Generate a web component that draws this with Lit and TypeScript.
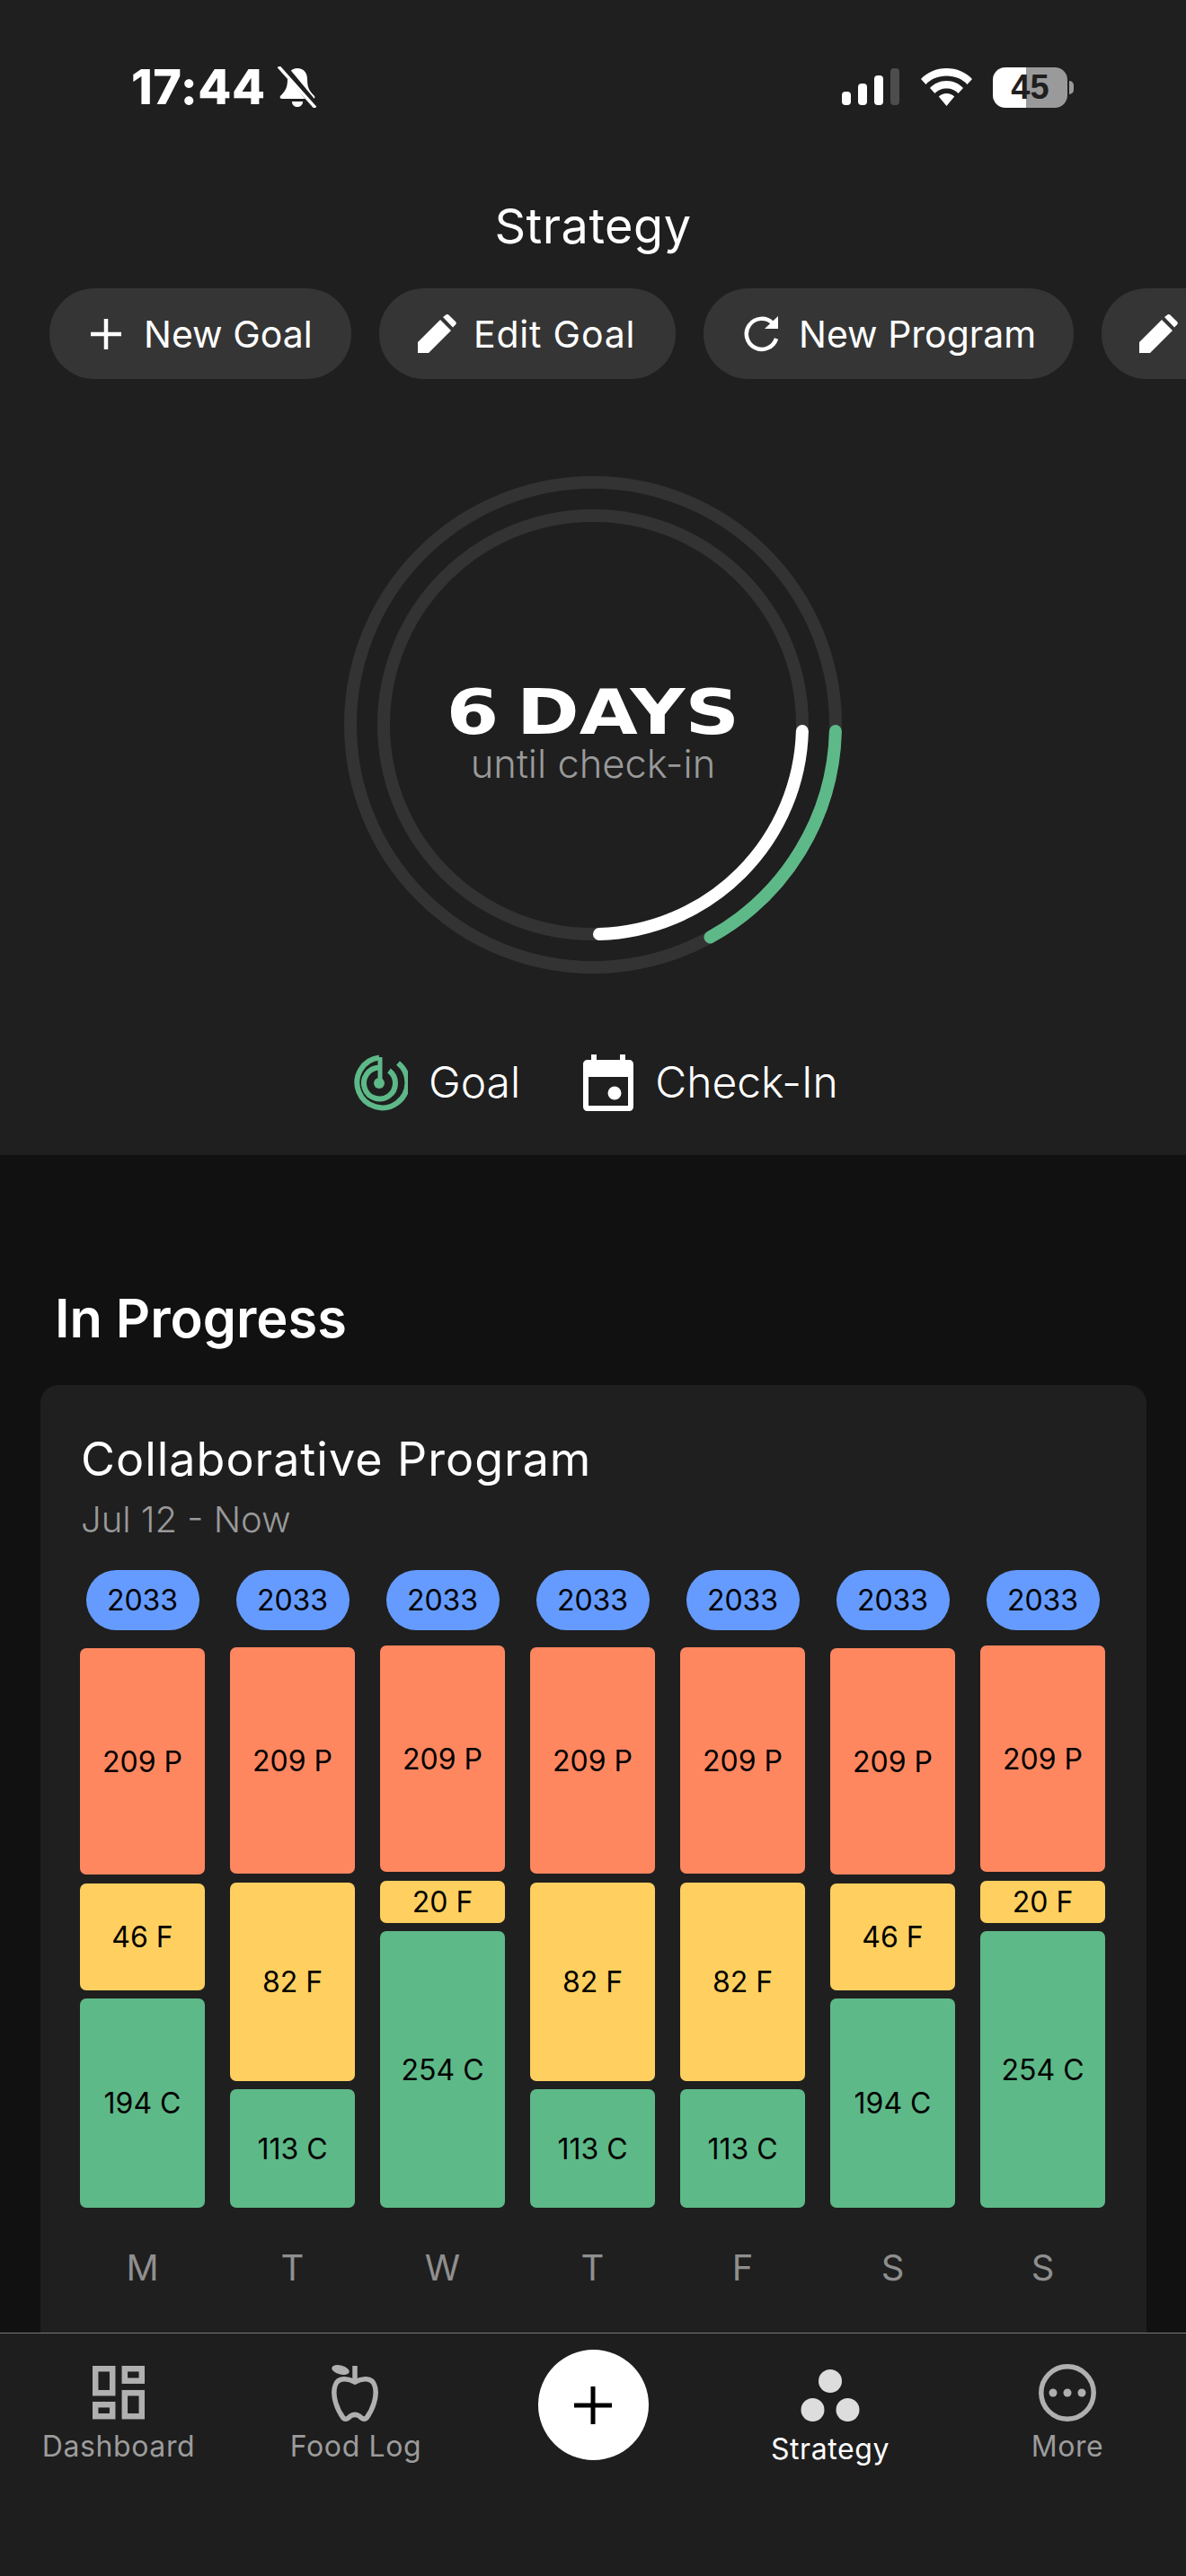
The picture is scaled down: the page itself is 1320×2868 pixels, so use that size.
import { LitElement, html, css, svg } from "lit";
import { customElement } from "lit/decorators.js";

type Day = { d: string; f: number; c: number; fh: number; ch: number };
const A = { f: 46, c: 194, fh: 119, ch: 233 };
const B = { f: 82, c: 113, fh: 221, ch: 132 };
const C = { f: 20, c: 254, fh: 47, ch: 308 };
const DAYS: Day[] = [
  { d: "M", ...A }, { d: "T", ...B }, { d: "W", ...C }, { d: "T", ...B },
  { d: "F", ...B }, { d: "S", ...A }, { d: "S", ...C },
];
const PENCIL = svg`<path d="M0 43V31L25 6l12 12L12 43zM28 3l3-2.300c1-1 2.500-1 3.500 0l7.500 7.300c1 1 1 2.500 0 3.500l-3 3z" fill="#fff"/>`;

@customElement("app-root")
export class AppRoot extends LitElement {
  static styles = css`
    :host { display: block; width: 1320px; height: 2868px; overflow: hidden; background: #111; font-family: "Inter", "Liberation Sans", sans-serif; color: #fff; }
    .page { height: 2868px; display: flex; flex-direction: column; }
    .scroll { flex: 1; min-height: 0; overflow: hidden; }
    .top { height: 1286px; background: #1f1f1f; display: flex; flex-direction: column; overflow: hidden; }
    .top > * { flex: none; }
    .status { box-sizing: border-box; height: 220px; padding: 73px 0 0 146px; display: flex; align-items: flex-start; }
    .status-row { height: 48px; display: flex; align-items: center; }
    .time { font-size: 54px; font-weight: 800; line-height: 48px; width: 162px; letter-spacing: 0.500px; }
    .status-right { margin-left: 583px; display: flex; align-items: center; gap: 23px; }
    .battery { width: 83px; height: 45px; border-radius: 14px; background: linear-gradient(90deg, #fff 0 37px, #9a9a9a 37px); color: #1f1f1f; font: 700 38px/45px "Liberation Sans", sans-serif; text-align: center; position: relative; margin-right: 9px; }
    .battery::after { content: ""; position: absolute; left: 85px; top: 15px; width: 5px; height: 15px; border-radius: 0 5px 5px 0; background: #9a9a9a; }
    h1 { margin: 0; font-size: 54px; line-height: 64px; font-weight: 400; text-align: center; letter-spacing: 0.5px; }
    .chips { margin-top: 37px; height: 101px; padding-left: 55px; display: flex; gap: 31px; white-space: nowrap; overflow: hidden; }
    .chip { flex: none; box-sizing: border-box; height: 101px; border-radius: 50px; background: #353535; display: flex; align-items: center; font-size: 41px; }
    .chip svg { flex: none; display: block; }
    .chip.wide { letter-spacing: 0.800px; }
    .ring { margin-top: 95px; align-self: center; width: 580px; height: 580px; display: grid; }
    .ring > * { grid-area: 1 / 1; }
    .ring-text { display: flex; flex-direction: column; align-items: center; padding-top: 242px; }
    .big { font: 700 70px/68px "DejaVu Sans", sans-serif; transform: scaleX(1.2); word-spacing: -8px; white-space: nowrap; }
    .sub { font-size: 43.500px; line-height: 50px; color: #9a9a9a; margin-top: -2px; font-weight: 300; }
    .legend { margin-top: 76px; height: 64px; display: flex; padding-left: 391px; align-items: center; font-size: 48px; font-weight: 300; }
    .legend span { line-height: 64px; }
    .l1 { margin: 0 70px 0 23px; }
    .l2 { margin-left: 24px; }
    .lower { padding: 141px 44px 0 45px; }
    h2 { margin: 0 0 0 16px; font-size: 59.500px; line-height: 80px; font-weight: 600; }
    .card { margin-top: 35px; background: #1f1f1f; border-radius: 20px; padding: 51px 44px 40px 45px; height: 1200px; box-sizing: border-box; }
    .card h3 { margin: 0; font-size: 52px; line-height: 64px; font-weight: 400; letter-spacing: 1px; }
    .dates { margin-top: 10px; font-size: 40px; line-height: 50px; font-weight: 300; color: #999; }
    .week { margin: 31px 0 0 -1px; display: grid; grid-template-columns: repeat(7, 139px); gap: 28px; }
    .day { display: flex; flex-direction: column; align-items: center; }
    .pill { width: 126px; height: 67px; border-radius: 34px; background: #659bff; color: #000; font-size: 32px; line-height: 67px; text-align: center; }
    .stack { margin-top: 17px; width: 100%; height: 626px; display: flex; flex-direction: column; justify-content: flex-end; gap: 9.500px; }
    .bar { border-radius: 7px; color: #000; font-size: 32px; display: flex; align-items: center; justify-content: center; }
    .p { background: #ff8760; height: 252px; }
    .f { background: #ffd05f; }
    .c { background: #5eb988; }
    .dow { margin-top: 42px; font-size: 40px; line-height: 50px; color: #8f8f8f; font-weight: 400; }
    nav { flex: none; height: 271px; border-top: 1px solid #777; box-sizing: border-box; background: #1e1e1e; display: grid; grid-template-columns: repeat(5, 264px); }
    .tab { display: flex; flex-direction: column; align-items: center; color: #9c9c9c; font-size: 32px; padding-top: 32px; }
    .icon { height: 66px; display: flex; align-items: flex-end; }
    .icon svg { display: block; }
    .tab span { margin-top: 6px; line-height: 44px; letter-spacing: 0.600px; }
    .tab.on { color: #fff; }
    .tab.on span { margin-top: 9px; }
    .add { width: 123px; height: 123px; border-radius: 50%; background: #fff; margin-top: -14px; display: flex; align-items: center; justify-content: center; }
  `;

  private chip(icon: unknown, w: number, label: string, pl: number, gap: number, cls = "chip") {
    return html`<div class=${cls} style="padding-left:${pl}px;gap:${gap}px;width:${w}px">${icon}${label}</div>`;
  }

  render() {
    return html`<div class="page">
      <div class="scroll">
        <section class="top">
          <div class="status">
            <div class="status-row">
              <div class="time">17:44</div>
              <svg width="46" height="46" viewBox="0 0 46 46">
                <path d="M23 2c7 0 11 5 11 12 0 9 2 13 8 19 1 2 0 3-2 3H6c-2 0-3-1-2-3 6-6 8-10 8-19C12 7 16 2 23 2zM17 39h12c0 4-3 6-6 6s-6-2-6-6z" fill="#fff"/>
                <path d="M6-1 45 46" stroke="#1f1f1f" stroke-width="8"/>
                <path d="M2 0 43 46" stroke="#fff" stroke-width="3.500"/>
              </svg>
            </div>
            <div class="status-row status-right">
              <svg width="65" height="42" viewBox="0 0 65 42"><rect y="26" width="10" height="15" rx="4" fill="#fff"/><rect x="18" y="17" width="10" height="24" rx="4" fill="#fff"/><rect x="36" y="8" width="10" height="33" rx="4" fill="#fff"/><rect x="54" y="0" width="10" height="41" rx="4" fill="#4d4d4d"/></svg>
              <svg width="57" height="42" viewBox="0 0 57 42">
                <path d="M28.500 0C17 0 7 4.500 0 12l5.500 6C11 12 19 8.500 28.500 8.500S46 12 51.500 18L57 12C50 4.500 40 0 28.500 0z" fill="#fff"/>
                <path d="M28.500 14c-7.500 0-14 3-18.500 8l5.500 6c3-3.500 8-5.500 13-5.500s10 2 13 5.500l5.500-6c-4.500-5-11-8-18.500-8z" fill="#fff"/>
                <path d="M28.500 28c-3.500 0-6.500 1.500-8.700 3.500L28.500 42l8.700-10.500C35 29.500 32 28 28.500 28z" fill="#fff"/>
              </svg>
              <div class="battery">45</div>
            </div>
          </div>
          <h1>Strategy</h1>
          <div class="chips">
            ${this.chip(svg`<svg width="34" height="34" viewBox="0 0 34 34"><path d="M17 0v34M0 17h34" stroke="#fff" stroke-width="4.500"/></svg>`, 336, "New Goal", 46, 25)}
            ${this.chip(svg`<svg width="43" height="43" viewBox="0 0 43 43">${PENCIL}</svg>`, 330, "Edit Goal", 43, 19, "chip wide")}
            ${this.chip(svg`<svg width="40" height="40" viewBox="0 0 40 40"><path d="M32 8A17 17 0 1 0 36 25" fill="none" stroke="#fff" stroke-width="4.500"/><path d="M23 14h15V0z" fill="#fff"/></svg>`, 412, "New Program", 45, 21)}
            ${this.chip(svg`<svg width="43" height="43" viewBox="0 0 43 43">${PENCIL}</svg>`, 200, "", 42, 0)}
          </div>
          <div class="ring">
            <svg width="580" height="580" viewBox="-290 -290 580 580" fill="none" stroke-width="14">
              <circle r="270" stroke="#333"/>
              <circle r="233" stroke="#333"/>
              <path d="M269.900 7A270 270 0 0 1 130.500 236.400" stroke="#5eb988" stroke-linecap="round"/>
              <path d="M232.900 7A233 233 0 0 1 7 233" stroke="#fff" stroke-linecap="round"/>
            </svg>
            <div class="ring-text">
              <div class="big">6 DAYS</div>
              <div class="sub">until check-in</div>
            </div>
          </div>
          <div class="legend">
            <svg width="63" height="63" viewBox="0 0 63 63" fill="none" stroke="#5eb988" stroke-width="6">
              <path d="M52 9.500A28 28 0 1 1 31 3.500"/>
              <path d="M42 18A17.500 17.500 0 1 1 31 14.500"/>
              <path d="M32 3V32" stroke-width="5"/>
              <circle cx="31" cy="32" r="6" fill="#5eb988" stroke="none"/>
            </svg>
            <span class="l1">Goal</span>
            <svg width="56" height="63" viewBox="0 0 56 63"><path fill-rule="evenodd" fill="#fff" d="M9 0h6v6h26V0h6v6h4c3 0 5 2 5 5v47c0 3-2 5-5 5H5c-3 0-5-2-5-5V11c0-3 2-5 5-5h4zM6 25v32h44V25z"/><circle cx="35" cy="43" r="7.500" fill="#fff"/></svg>
            <span class="l2">Check-In</span>
          </div>
        </section>
        <section class="lower">
          <h2>In Progress</h2>
          <div class="card">
            <h3>Collaborative Program</h3>
            <div class="dates">Jul 12 - Now</div>
            <div class="week">
              ${DAYS.map((d) => html`<div class="day">
                <div class="pill">2033</div>
                <div class="stack">
                  <div class="bar p">209 P</div>
                  <div class="bar f" style="height:${d.fh}px">${d.f} F</div>
                  <div class="bar c" style="height:${d.ch}px">${d.c} C</div>
                </div>
                <div class="dow">${d.d}</div>
              </div>`)}
            </div>
          </div>
        </section>
      </div>
      <nav>
        <div class="tab">
          <div class="icon"><svg width="58" height="62" viewBox="0 0 58 62" fill="none" stroke="#b0b0b0" stroke-width="6.500"><rect x="3.200" y="3.200" width="19" height="27"/><rect x="35.800" y="3.200" width="19" height="13.500"/><rect x="3.200" y="43.200" width="19" height="13"/><rect x="35.800" y="30.200" width="19" height="26"/></svg></div>
          <span>Dashboard</span>
        </div>
        <div class="tab">
          <div class="icon"><svg width="56" height="64" viewBox="0 0 56 64" fill="none" stroke="#b0b0b0" stroke-width="5.500"><path d="M27 20C20 16 8 14 5 24C1 36 8 52 14 60C17 63 20 60 22 58C25 56 29 56 32 58C34 60 37 63 40 60C46 52 53 36 49 24C46 14 34 16 27 20Z"/><path d="M27 2V20"/><ellipse cx="11" cy="6.500" rx="10" ry="5" transform="rotate(15 11 6.500)" fill="#b0b0b0" stroke="none"/></svg></div>
          <span>Food Log</span>
        </div>
        <div class="tab">
          <div class="add"><svg width="42" height="42" viewBox="0 0 42 42"><path d="M21 0v42M0 21h42" stroke="#000" stroke-width="5"/></svg></div>
        </div>
        <div class="tab on">
          <div class="icon"><svg width="66" height="60" viewBox="0 0 66 60" fill="#ddd"><circle cx="33" cy="15" r="13"/><circle cx="13.500" cy="47" r="13"/><circle cx="52.500" cy="47" r="13"/></svg></div>
          <span>Strategy</span>
        </div>
        <div class="tab">
          <div class="icon"><svg width="64" height="64" viewBox="0 0 64 64" fill="none"><circle cx="32" cy="32" r="29.200" stroke="#b0b0b0" stroke-width="5.500"/><g fill="#b0b0b0"><circle cx="16" cy="32" r="4.500"/><circle cx="32" cy="32" r="4.500"/><circle cx="48" cy="32" r="4.500"/></g></svg></div>
          <span>More</span>
        </div>
      </nav>
    </div>`;
  }
}
